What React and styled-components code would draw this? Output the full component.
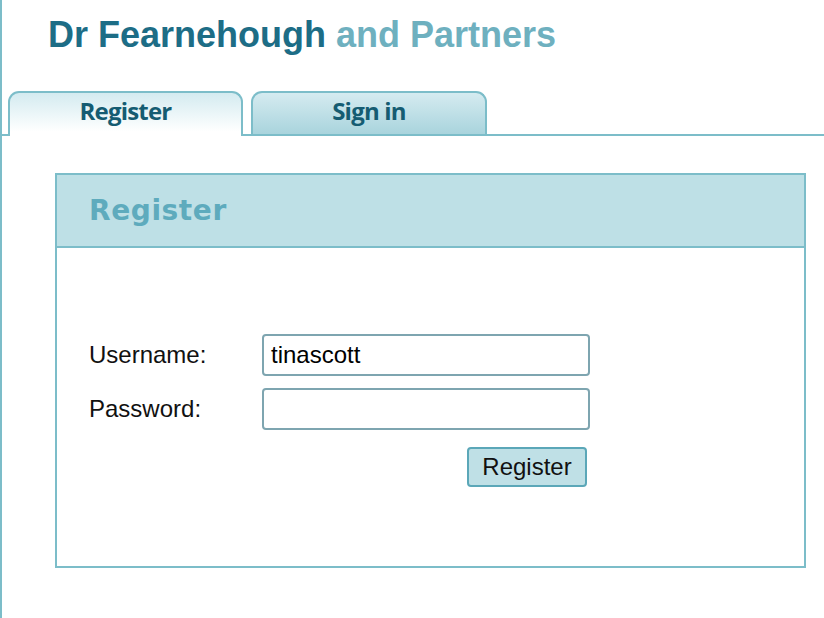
import React from "react";
import styled, { createGlobalStyle } from "styled-components";

const Global = createGlobalStyle`
  html, body { margin: 0; padding: 0; background: #fff; }
  body { font-family: "Liberation Sans", Arial, sans-serif; }
`;

const Page = styled.div`
  min-height: 618px;
  border-left: 2px solid #7cbdc9;
  box-sizing: border-box;
`;

const Title = styled.h1`
  margin: 0;
  padding: 14px 0 0 46px;
  font-family: "Liberation Sans", Arial, sans-serif;
  font-weight: 700;
  font-size: 36px;
  line-height: 42px;
  color: #1d6d86;
  white-space: nowrap;
`;

const Light = styled.span`
  color: #6eb0bf;
`;

const TabBar = styled.div`
  margin-top: 35px;
  display: flex;
  align-items: flex-end;
  gap: 8px;
  padding-left: 6px;
  height: 43px;
  border-bottom: 2px solid #7cbdc9;
`;

const Tab = styled.div`
  box-sizing: border-box;
  width: ${(p) => (p.$active ? "235px" : "236px")};
  height: ${(p) => (p.$active ? "45px" : "43px")};
  margin-bottom: ${(p) => (p.$active ? "-2px" : "0")};
  border: 2px solid #7cbdc9;
  border-bottom: none;
  border-radius: 11px 11px 0 0;
  background: ${(p) =>
    p.$active
      ? "linear-gradient(#d4ebf0, #ffffff 90%)"
      : "linear-gradient(#d5ebf0, #a9d4dd)"};
  display: flex;
  justify-content: center;
  padding-top: 3px;
  font-family: "Open Sans", sans-serif;
  font-weight: 700;
  font-size: 24px;
  letter-spacing: -0.8px;
  line-height: 30px;
  color: #155c72;
`;

const Panel = styled.section`
  margin: 37px 0 0 53px;
  width: 751px;
  box-sizing: border-box;
  border: 2px solid #7cbdc9;
`;

const PanelHeader = styled.div`
  height: 71px;
  background: #bee0e6;
  border-bottom: 2px solid #7cbdc9;
  display: flex;
  align-items: center;
  padding-left: 32px;
`;

const PanelTitle = styled.h2`
  margin: 0;
  font-family: "DejaVu Sans", Verdana, sans-serif;
  font-weight: 700;
  font-size: 28px;
  letter-spacing: 0.6px;
  color: #5eabbd;
`;

const Form = styled.div`
  display: grid;
  grid-template-columns: 173px 328px;
  row-gap: 12px;
  padding: 86px 0 79px 32px;
  align-items: center;
`;

const Label = styled.label`
  font-size: 24px;
  color: #111;
`;

const Input = styled.div`
  box-sizing: border-box;
  height: 42px;
  border: 2px solid #7ea5b0;
  border-radius: 4px;
  padding-left: 7px;
  display: flex;
  align-items: center;
  font-size: 24px;
  color: #000;
`;

const Button = styled.button`
  grid-column: 2;
  justify-self: end;
  margin: 5px 3px 0 0;
  box-sizing: border-box;
  width: 120px;
  height: 40px;
  background: #bfe0e6;
  border: 2px solid #5ba7b8;
  border-radius: 4px;
  font-family: "Liberation Sans", Arial, sans-serif;
  font-size: 24px;
  color: #111;
  padding: 0;
`;

export default function App() {
  return (
    <>
      <Global />
      <Page>
        <Title>
          Dr Fearnehough <Light>and Partners</Light>
        </Title>
        <TabBar>
          <Tab $active>Register</Tab>
          <Tab>Sign in</Tab>
        </TabBar>
        <Panel>
          <PanelHeader>
            <PanelTitle>Register</PanelTitle>
          </PanelHeader>
          <Form>
            <Label>Username:</Label>
            <Input>tinascott</Input>
            <Label>Password:</Label>
            <Input />
            <Button>Register</Button>
          </Form>
        </Panel>
      </Page>
    </>
  );
}
